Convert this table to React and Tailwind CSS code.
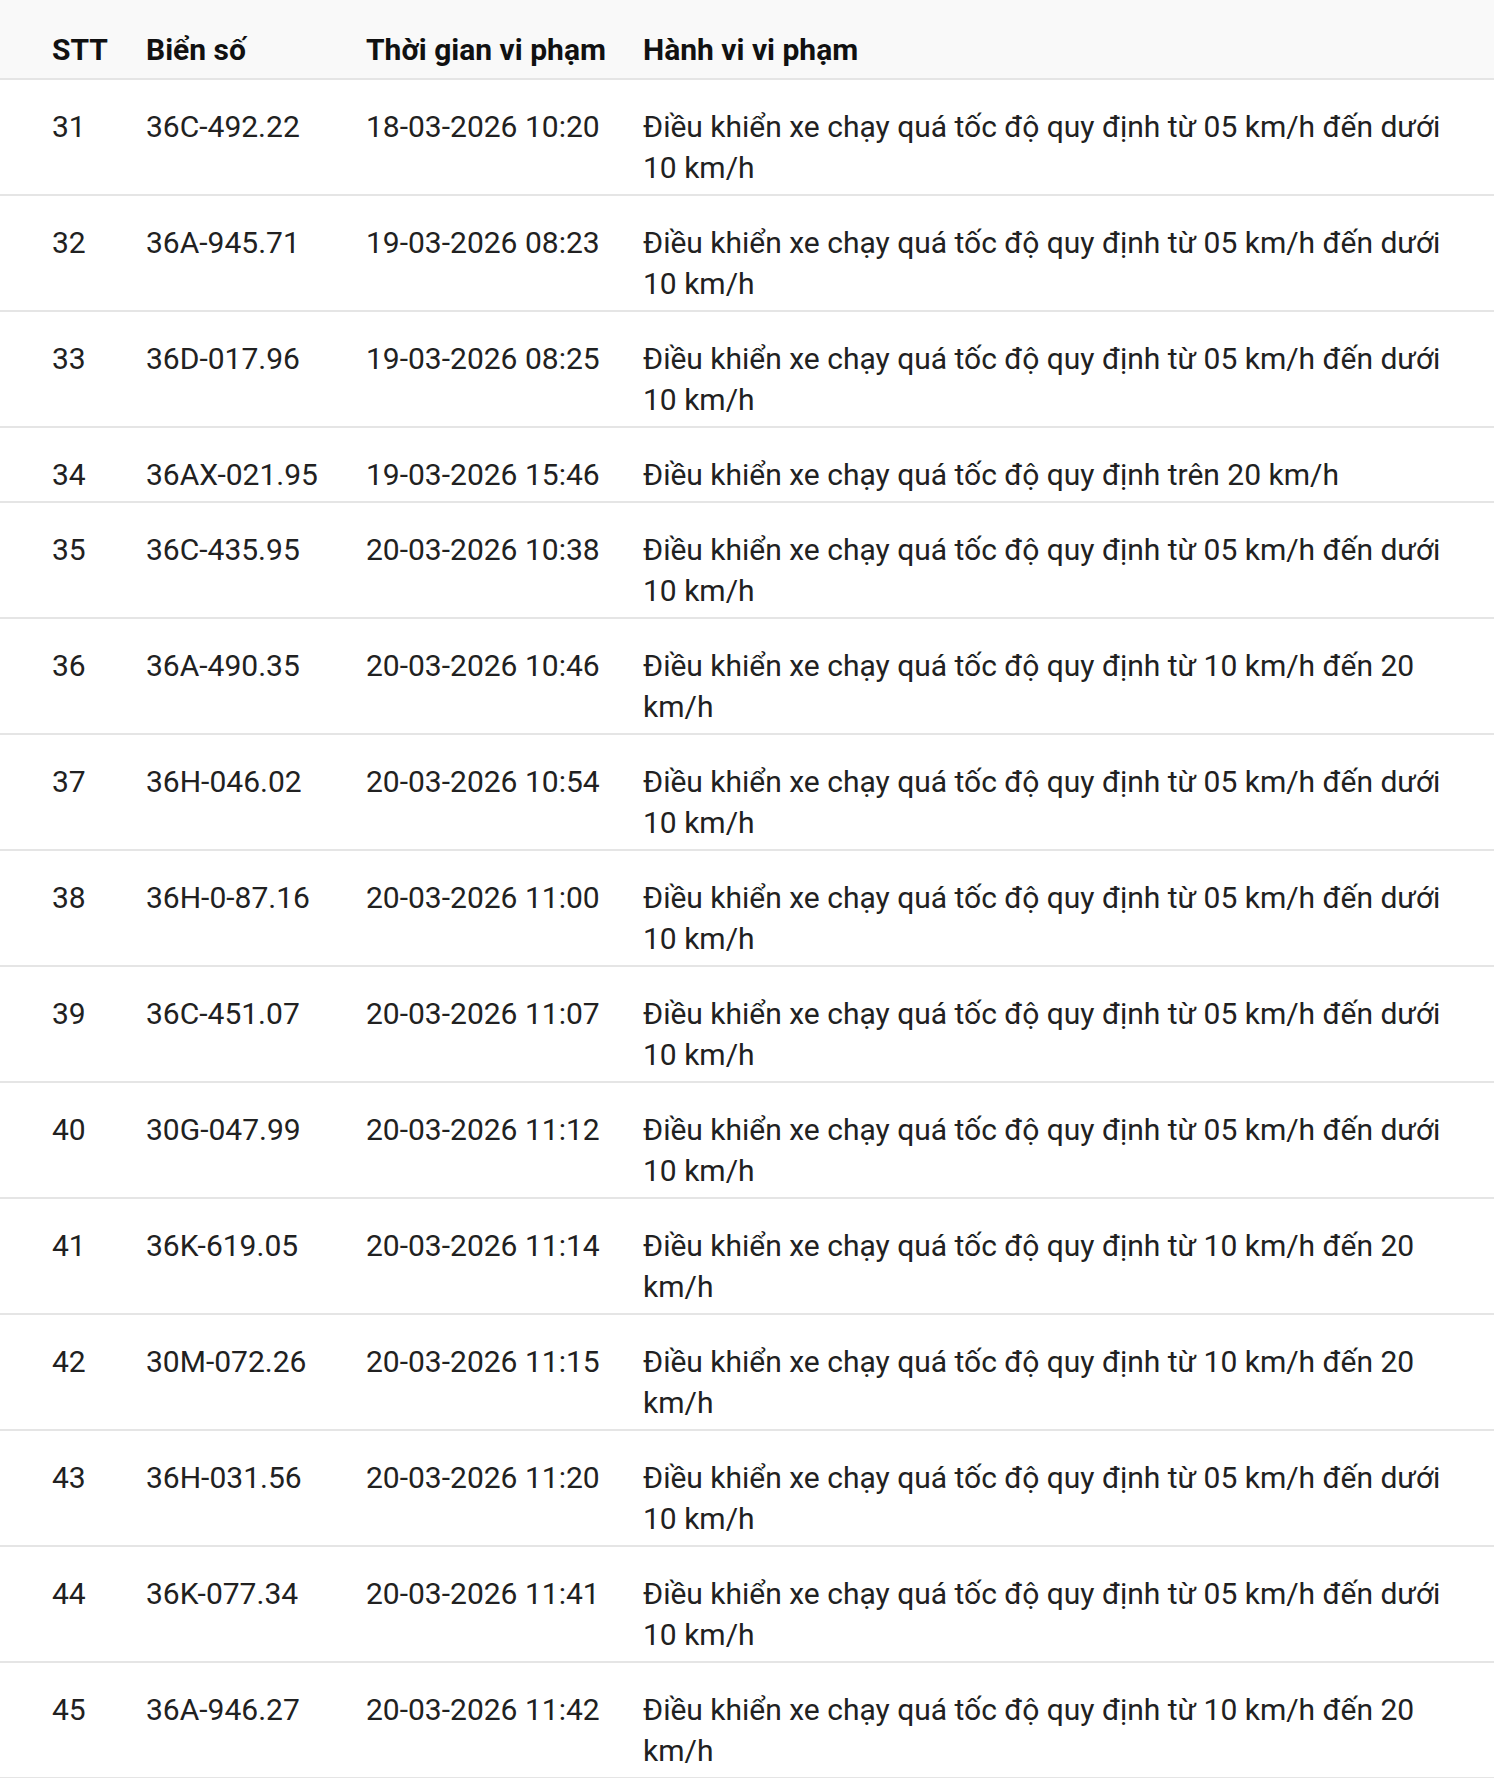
const rows = [
  ["31", "36C-492.22", "18-03-2026 10:20", "Điều khiển xe chạy quá tốc độ quy định từ 05 km/h đến dưới 10 km/h"],
  ["32", "36A-945.71", "19-03-2026 08:23", "Điều khiển xe chạy quá tốc độ quy định từ 05 km/h đến dưới 10 km/h"],
  ["33", "36D-017.96", "19-03-2026 08:25", "Điều khiển xe chạy quá tốc độ quy định từ 05 km/h đến dưới 10 km/h"],
  ["34", "36AX-021.95", "19-03-2026 15:46", "Điều khiển xe chạy quá tốc độ quy định trên 20 km/h"],
  ["35", "36C-435.95", "20-03-2026 10:38", "Điều khiển xe chạy quá tốc độ quy định từ 05 km/h đến dưới 10 km/h"],
  ["36", "36A-490.35", "20-03-2026 10:46", "Điều khiển xe chạy quá tốc độ quy định từ 10 km/h đến 20 km/h"],
  ["37", "36H-046.02", "20-03-2026 10:54", "Điều khiển xe chạy quá tốc độ quy định từ 05 km/h đến dưới 10 km/h"],
  ["38", "36H-0-87.16", "20-03-2026 11:00", "Điều khiển xe chạy quá tốc độ quy định từ 05 km/h đến dưới 10 km/h"],
  ["39", "36C-451.07", "20-03-2026 11:07", "Điều khiển xe chạy quá tốc độ quy định từ 05 km/h đến dưới 10 km/h"],
  ["40", "30G-047.99", "20-03-2026 11:12", "Điều khiển xe chạy quá tốc độ quy định từ 05 km/h đến dưới 10 km/h"],
  ["41", "36K-619.05", "20-03-2026 11:14", "Điều khiển xe chạy quá tốc độ quy định từ 10 km/h đến 20 km/h"],
  ["42", "30M-072.26", "20-03-2026 11:15", "Điều khiển xe chạy quá tốc độ quy định từ 10 km/h đến 20 km/h"],
  ["43", "36H-031.56", "20-03-2026 11:20", "Điều khiển xe chạy quá tốc độ quy định từ 05 km/h đến dưới 10 km/h"],
  ["44", "36K-077.34", "20-03-2026 11:41", "Điều khiển xe chạy quá tốc độ quy định từ 05 km/h đến dưới 10 km/h"],
  ["45", "36A-946.27", "20-03-2026 11:42", "Điều khiển xe chạy quá tốc độ quy định từ 10 km/h đến 20 km/h"],
]

const App = () => {
  return (
    <div className="w-[1494px] bg-white font-['Roboto',sans-serif] text-[30px] leading-[41px] text-[#212121]">
      <table className="w-full table-fixed border-collapse">
        <colgroup>
          <col className="w-[129px]" />
          <col className="w-[220px]" />
          <col className="w-[277px]" />
          <col />
        </colgroup>
        <thead>
          <tr className="bg-[#f9f9f9] border-b-2 border-[#e5e5e5] text-left text-[#111]">
            <th className="pl-[52px] pt-[29px] pb-[8px] font-bold">STT</th>
            <th className="pl-[17px] pt-[29px] pb-[8px] font-bold">Biển số</th>
            <th className="pl-[17px] pt-[29px] pb-[8px] font-bold">Thời gian vi phạm</th>
            <th className="pl-[17px] pr-[43px] pt-[29px] pb-[8px] font-bold">Hành vi vi phạm</th>
          </tr>
        </thead>
        <tbody>
          {rows.map((r) => (
            <tr key={r[0]} className="border-b-2 border-[#e5e5e5] align-top">
              <td className="pl-[52px] pt-[26px] pb-[6px]">{r[0]}</td>
              <td className="pl-[17px] pt-[26px] pb-[6px]">{r[1]}</td>
              <td className="pl-[17px] pt-[26px] pb-[6px]">{r[2]}</td>
              <td className="pl-[17px] pr-[43px] pt-[26px] pb-[6px]">{r[3]}</td>
            </tr>
          ))}
        </tbody>
      </table>
    </div>
  )
}

export default App
